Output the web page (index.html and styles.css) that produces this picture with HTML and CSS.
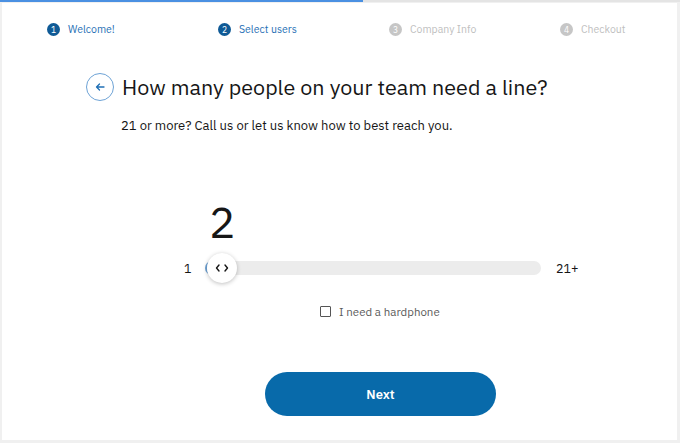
FILE: index.html
```html
<!DOCTYPE html>
<html>
<head>
<meta charset="utf-8">
<link rel="stylesheet" href="styles.css">
</head>
<body>
<div class="progress"><div class="progress-fill"></div></div>
<main class="card">
  <ol class="steps">
    <li class="step done"><span class="num">1</span><span class="label">Welcome!</span></li>
    <li class="step done"><span class="num">2</span><span class="label">Select users</span></li>
    <li class="step"><span class="num">3</span><span class="label">Company Info</span></li>
    <li class="step"><span class="num">4</span><span class="label">Checkout</span></li>
  </ol>
  <section class="content">
    <div class="title-row">
      <button class="back" aria-label="Back">
        <svg width="12" height="12" viewBox="0 0 12 12"><path d="M10 6H2.5M5.5 3L2.5 6l3 3" fill="none" stroke="#1f6fb5" stroke-width="1.3" stroke-linecap="round" stroke-linejoin="round"/></svg>
      </button>
      <h1 class="title">How many people on your team need a line?</h1>
    </div>
    <p class="subtitle">21 or more? Call us or let us know how to best reach you.</p>
    <div class="value">2</div>
    <div class="slider-row">
      <span class="min">1</span>
      <div class="track">
        <div class="fill"></div>
        <div class="thumb"><svg width="14" height="10" viewBox="0 0 14 10"><path d="M4 2L1.5 5 4 8M10 2l2.5 3L10 8" fill="none" stroke="#161616" stroke-width="1.4" stroke-linecap="round" stroke-linejoin="round"/></svg></div>
      </div>
      <span class="max">21+</span>
    </div>
    <label class="check"><span class="box"></span>I need a hardphone</label>
    <button class="next">Next</button>
  </section>
</main>
</body>
</html>
```
FILE: styles.css
```css
* { box-sizing: border-box; }
html, body { margin: 0; padding: 0; }
body {
  width: 680px;
  height: 443px;
  background: #f0f0f0;
  font-family: "IBM Plex Sans", "Noto Sans", sans-serif;
  overflow: hidden;
}
.progress {
  height: 2px;
  background: #e4e4e4;
}
.progress-fill {
  width: 363px;
  height: 2px;
  background: #4a90e2;
}
.card {
  margin: 1px 3px 0 2px;
  height: 437px;
  background: #fff;
}
.steps {
  list-style: none;
  margin: 0;
  padding: 19px 0 0 45px;
  display: grid;
  grid-template-columns: repeat(3, 171px) 1fr;
  height: 36px;
}
.step {
  display: flex;
  align-items: center;
  gap: 8px;
  height: 14px;
  font-size: 10.5px;
  color: #c0c0c0;
}
.step .num {
  width: 13px;
  height: 13px;
  border-radius: 50%;
  background: #c6c6c6;
  color: #fff;
  font-size: 8.5px;
  display: flex;
  align-items: center;
  justify-content: center;
}
.step.done { color: #1f6fb5; }
.step.done .num { background: #0f5a96; }
.content {
  padding: 34px 0 0 84px;
}
.title-row {
  display: flex;
  align-items: center;
  gap: 8px;
}
.back {
  width: 28px;
  height: 28px;
  border-radius: 50%;
  border: 1px solid #6ea3d6;
  background: #fff;
  padding: 0;
  display: flex;
  align-items: center;
  justify-content: center;
  margin: 0;
}
.title {
  margin: 0;
  font-size: 21.5px;
  font-weight: 400;
  color: #161616;
}
.subtitle {
  margin: 16px 0 0 35px;
  font-size: 13px;
  color: #161616;
}
.value {
  margin: 66px 0 0 123px;
  font-size: 44px;
  line-height: 44px;
  color: #161616;
}
.slider-row {
  display: flex;
  align-items: center;
  margin: 9px 0 0 98px;
  height: 30px;
}
.min, .max {
  font-size: 12.5px;
  color: #161616;
}
.min { width: 21px; }
.max { margin-left: 15px; }
.track {
  position: relative;
  width: 336px;
  height: 14px;
  border-radius: 7px;
  background: #ececec;
}
.fill {
  width: 16px;
  height: 14px;
  border-radius: 7px 0 0 7px;
  border-left: 2px solid #6ea3d6;
}
.thumb {
  position: absolute;
  left: 2px;
  top: -8px;
  width: 30px;
  height: 30px;
  border-radius: 50%;
  background: #fff;
  box-shadow: 0 1px 4px rgba(0,0,0,0.25);
  display: flex;
  align-items: center;
  justify-content: center;
}
.check {
  display: flex;
  align-items: center;
  gap: 8px;
  margin: 21px 0 0 234px;
  font-size: 11.5px;
  color: #5a5a5a;
}
.box {
  width: 11px;
  height: 11px;
  border: 1.3px solid #555;
  border-radius: 1px;
}
.next {
  display: block;
  margin: 53px 0 0 179px;
  width: 231px;
  height: 44px;
  border-radius: 22px;
  border: none;
  background: #086aaa;
  color: #fff;
  font-family: inherit;
  font-size: 13px;
  font-weight: 600;
}
```
